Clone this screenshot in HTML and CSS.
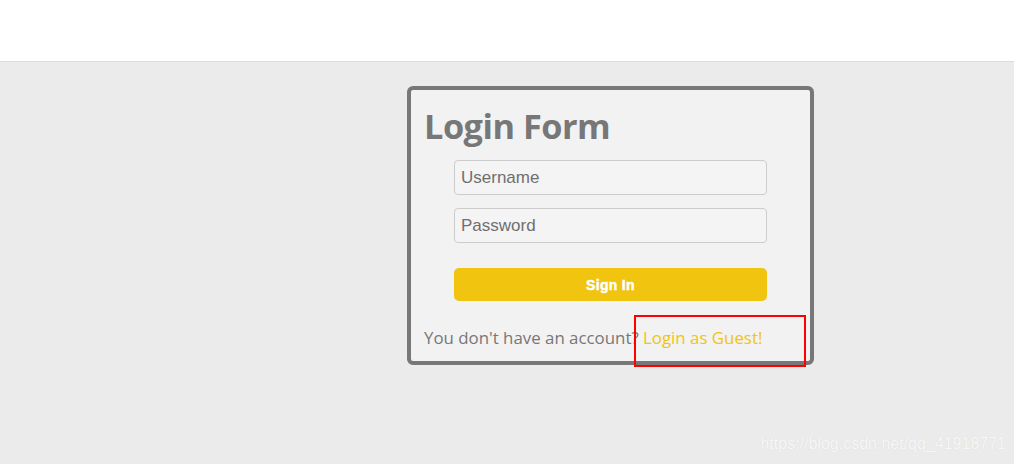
FILE: index.html
```html
<!DOCTYPE html>
<html lang="en">
<head>
<meta charset="utf-8">
<title>Login Form</title>
<link rel="stylesheet" href="styles.css">
</head>
<body>
<header class="topbar"></header>
<main class="stage">
  <form class="login-card" onsubmit="return false;">
    <h1 class="login-title">Login Form</h1>
    <div class="fields">
      <input class="field" type="text" placeholder="Username">
      <input class="field" type="password" placeholder="Password">
      <button class="signin" type="submit">Sign In</button>
    </div>
    <p class="footnote">You don't have an account? <a class="guest" href="#">Login as Guest!</a></p>
    <span class="annotation"></span>
  </form>
  <span class="watermark">https://blog.csdn.net/qq_41918771</span>
</main>
</body>
</html>
```
FILE: styles.css
```css
* { box-sizing: border-box; }
html, body { margin: 0; padding: 0; }
body {
  width: 1014px;
  height: 464px;
  overflow: hidden;
  background: #ebebeb;
  font-family: "Liberation Sans", Arial, sans-serif;
}
.topbar {
  height: 62px;
  background: #ffffff;
  border-bottom: 1px solid #dcdcdc;
}
.stage {
  position: relative;
  height: 402px;
  padding-top: 24px;
  padding-left: 407px;
}
.login-card {
  position: relative;
  width: 407px;
  height: 279px;
  border: 4px solid #777777;
  border-radius: 6px;
  background: #f2f2f2;
  padding: 0 13px;
}
.login-title {
  margin: 14px 0 0 0;
  font-family: "Open Sans", "Noto Sans", sans-serif;
  font-weight: 700;
  font-size: 34.3px;
  line-height: 44px;
  color: #777777;
  letter-spacing: -0.5px;
}
.fields {
  display: flex;
  flex-direction: column;
  align-items: center;
  margin-top: 12px;
}
.field {
  width: 313px;
  height: 35px;
  margin: 0 0 13px 0;
  padding: 0 6px;
  border: 1px solid #cccccc;
  border-radius: 4px;
  background: #f4f4f4;
  font-family: "Liberation Sans", Arial, sans-serif;
  font-size: 17px;
  color: #555;
}
.field::placeholder { color: #6f6f6f; }
.signin {
  width: 313px;
  height: 33px;
  margin-top: 12px;
  border: none;
  border-radius: 5px;
  background: #f1c40f;
  color: #ffffff;
  font-family: "Liberation Sans", Arial, sans-serif;
  font-weight: 700;
  font-size: 14px;
  letter-spacing: 0.3px;
  -webkit-text-stroke: 0.5px #ffffff;
}
.footnote {
  margin: 25px 0 0 0;
  font-family: "Open Sans", "Noto Sans", sans-serif;
  font-size: 16.85px;
  line-height: 24px;
  color: #777777;
}
.guest {
  color: #f1c40f;
  text-decoration: none;
}
.annotation {
  position: absolute;
  left: 223px;
  top: 225px;
  width: 172px;
  height: 52px;
  border: 2px solid #ff0000;
}
.watermark {
  position: absolute;
  right: 8px;
  top: 373px;
  font-family: "Liberation Sans", Arial, sans-serif;
  font-size: 16px;
  color: #f7f7f7;
  text-shadow: 0 0 1px #d6d6d6;
}
```
